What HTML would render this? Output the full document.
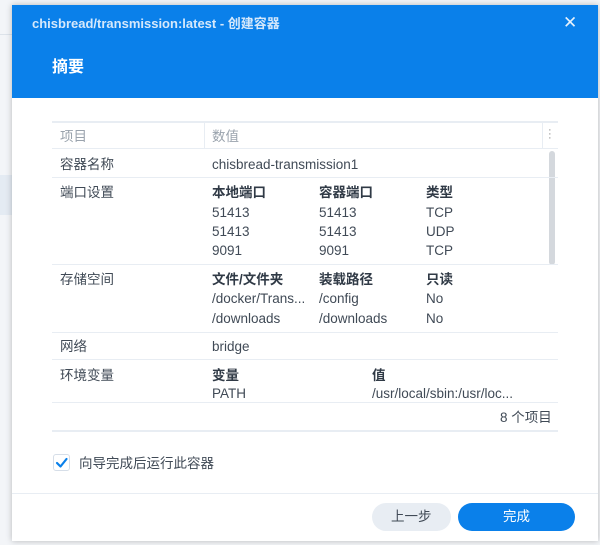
<!DOCTYPE html><html><head><meta charset="utf-8"><style>
*{margin:0;padding:0;box-sizing:border-box}
body{width:600px;height:545px;background:#f3f5f8;position:relative;overflow:hidden;font-family:"Liberation Sans","Noto Sans CJK SC",sans-serif;font-size:13.5px;color:#404a56}
.t{position:absolute;white-space:nowrap;line-height:16px}
.hl{position:absolute;left:52px;width:506px;height:1px;background:#e8edf3}
.b{font-weight:bold;color:#303a46}
</style></head><body>
<div style="position:absolute;left:0;top:34px;width:12px;height:1px;background:#dde3ea"></div>
<div style="position:absolute;left:0;top:175px;width:12px;height:40px;background:#e4ebf3"></div>
<div style="position:absolute;left:12px;top:5px;width:586px;height:536px;background:#fff;box-shadow:0 0 6px rgba(0,0,0,.25)"></div>
<div style="position:absolute;left:12px;top:5px;width:586px;height:93px;background:#0a80ea"></div>
<div class="t" style="left:32px;top:16px;color:#d5e8fb;font-size:13px;font-weight:bold">chisbread/transmission:latest - 创建容器</div>
<div class="t" style="left:563px;top:15px;color:#e6f1fc;font-size:17px">✕</div>
<div class="t" style="left:52px;top:60px;color:#fff;font-size:16px;font-weight:bold">摘要</div>
<div class="hl" style="top:121px;height:2px"></div>
<div class="hl" style="top:148px"></div>
<div style="position:absolute;left:204px;top:123px;width:1px;height:25px;background:#e8edf3"></div>
<div style="position:absolute;left:542px;top:123px;width:1px;height:25px;background:#e8edf3"></div>
<div class="t" style="left:548px;top:128px;color:#888;font-size:11px;line-height:4px">·<br>·<br>·</div>
<div style="position:absolute;left:549px;top:151px;width:6px;height:114px;border-radius:3px;background:#d4d8dd"></div>
<div class="t" style="left:60px;top:129px;color:#9aa3ad">项目</div>
<div class="t" style="left:212px;top:129px;color:#9aa3ad">数值</div>
<div class="t" style="left:60px;top:157px">容器名称</div>
<div class="t" style="left:212px;top:157px">chisbread-transmission1</div>
<div class="hl" style="top:177px"></div>
<div class="t" style="left:60px;top:185px">端口设置</div>
<div class="t b" style="left:212px;top:185px">本地端口</div><div class="t b" style="left:319px;top:185px">容器端口</div><div class="t b" style="left:426px;top:185px">类型</div>
<div class="t" style="left:212px;top:205px">51413</div><div class="t" style="left:319px;top:205px">51413</div><div class="t" style="left:426px;top:205px">TCP</div>
<div class="t" style="left:212px;top:224px">51413</div><div class="t" style="left:319px;top:224px">51413</div><div class="t" style="left:426px;top:224px">UDP</div>
<div class="t" style="left:212px;top:243px">9091</div><div class="t" style="left:319px;top:243px">9091</div><div class="t" style="left:426px;top:243px">TCP</div>
<div class="hl" style="top:264px"></div>
<div class="t" style="left:60px;top:272px">存储空间</div>
<div class="t b" style="left:212px;top:272px">文件/文件夹</div><div class="t b" style="left:319px;top:272px">装载路径</div><div class="t b" style="left:426px;top:272px">只读</div>
<div class="t" style="left:212px;top:291px">/docker/Trans...</div><div class="t" style="left:319px;top:291px">/config</div><div class="t" style="left:426px;top:291px">No</div>
<div class="t" style="left:212px;top:311px">/downloads</div><div class="t" style="left:319px;top:311px">/downloads</div><div class="t" style="left:426px;top:311px">No</div>
<div class="hl" style="top:332px"></div>
<div class="t" style="left:60px;top:339px">网络</div>
<div class="t" style="left:212px;top:339px">bridge</div>
<div class="hl" style="top:359px"></div>
<div class="t" style="left:60px;top:368px">环境变量</div>
<div class="t b" style="left:212px;top:368px">变量</div><div class="t b" style="left:372px;top:368px">值</div>
<div class="t" style="left:212px;top:386px">PATH</div><div class="t" style="left:372px;top:386px">/usr/local/sbin:/usr/loc...</div>
<div class="hl" style="top:402px"></div>
<div class="t" style="left:500px;top:410px">8 个项目</div>
<div class="hl" style="top:430px;height:2px"></div>
<div style="position:absolute;left:53px;top:454px;width:17px;height:17px;border:1px solid #d6dee8;border-radius:3px"></div>
<svg style="position:absolute;left:53px;top:454px" width="17" height="17"><path d="M4 9 L7.5 12.5 L13.5 5" fill="none" stroke="#0a80ea" stroke-width="2.2" stroke-linecap="round" stroke-linejoin="round"/></svg>
<div class="t" style="left:79px;top:456px">向导完成后运行此容器</div>
<div style="position:absolute;left:12px;top:493px;width:586px;height:1px;background:#e8edf3"></div>
<div style="position:absolute;left:372px;top:503px;width:79px;height:28px;border-radius:14px;background:#e8edf3"></div>
<div class="t" style="left:391px;top:509px">上一步</div>
<div style="position:absolute;left:458px;top:503px;width:117px;height:28px;border-radius:14px;background:#0a80ea"></div>
<div class="t" style="left:503px;top:509px;color:#fff">完成</div>
</body></html>
